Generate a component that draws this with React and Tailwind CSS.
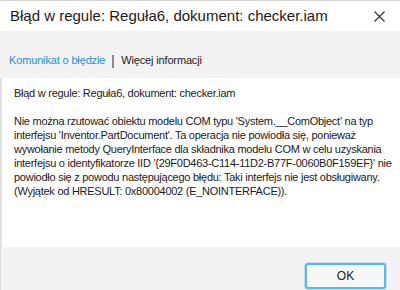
import React from 'react';

const lines = [
  "Nie można rzutować obiektu modelu COM typu 'System.__ComObject' na typ",
  "interfejsu 'Inventor.PartDocument'. Ta operacja nie powiodła się, ponieważ",
  'wywołanie metody QueryInterface dla składnika modelu COM w celu uzyskania',
  "interfejsu o identyfikatorze IID '{29F0D463-C114-11D2-B77F-0060B0F159EF}' nie",
  'powiodło się z powodu następującego błędu: Taki interfejs nie jest obsługiwany.',
  '(Wyjątek od HRESULT: 0x80004002 (E_NOINTERFACE)).',
];

const App = () => (
  <div className="flex h-[290px] w-[400px] flex-col overflow-hidden border-t border-[#d4d4d4] bg-white font-['Liberation_Sans',Arial,sans-serif]">
    <header className="flex h-[30px] shrink-0 items-center justify-between pl-[10px] pr-[15px]">
      <h1 className="text-[15px] text-[#1a1a1a]">Błąd w regule: Reguła6, dokument: checker.iam</h1>
      <svg width="11" height="11" viewBox="0 0 11 11" className="text-[#333]">
        <path d="M0.5 0.5 L10.5 10.5 M10.5 0.5 L0.5 10.5" stroke="currentColor" strokeWidth="1.2" />
      </svg>
    </header>

    <nav className="flex h-[47px] shrink-0 items-end bg-[#f3f3f3] pb-[10px] pl-[9px] text-[11px] tracking-[-0.15px]">
      <span className="text-[#1b8fd6]">Komunikat o błędzie</span>
      <span className="mx-[7px] h-[13px] w-[2px] bg-[#8a8a8a]" />
      <span className="text-[#222]">Więcej informacji</span>
    </nav>

    <main className="h-[169px] shrink-0 border-l-2 border-[#e0e0e0] pl-[12px] pt-[8px] text-[11px] leading-[14px] tracking-[-0.26px] text-[#1a1a1a]">
      <p>Błąd w regule: Reguła6, dokument: checker.iam</p>
      <div className="mt-[14px]">
        {lines.map((line) => (
          <p key={line} className="whitespace-nowrap">{line}</p>
        ))}
      </div>
    </main>

    <footer className="flex flex-1 items-start justify-end border-l border-[#dcdcdc] bg-[#f3f3f3] pr-[14px] pt-[16px]">
      <button className="h-[26px] w-[81px] rounded-[3px] border-2 border-[#5cb6e8] bg-[#f7f7f7] text-[12px] text-[#222] shadow-[0_0_0_1px_#bfe1f5]">
        OK
      </button>
    </footer>
  </div>
);

export default App;
